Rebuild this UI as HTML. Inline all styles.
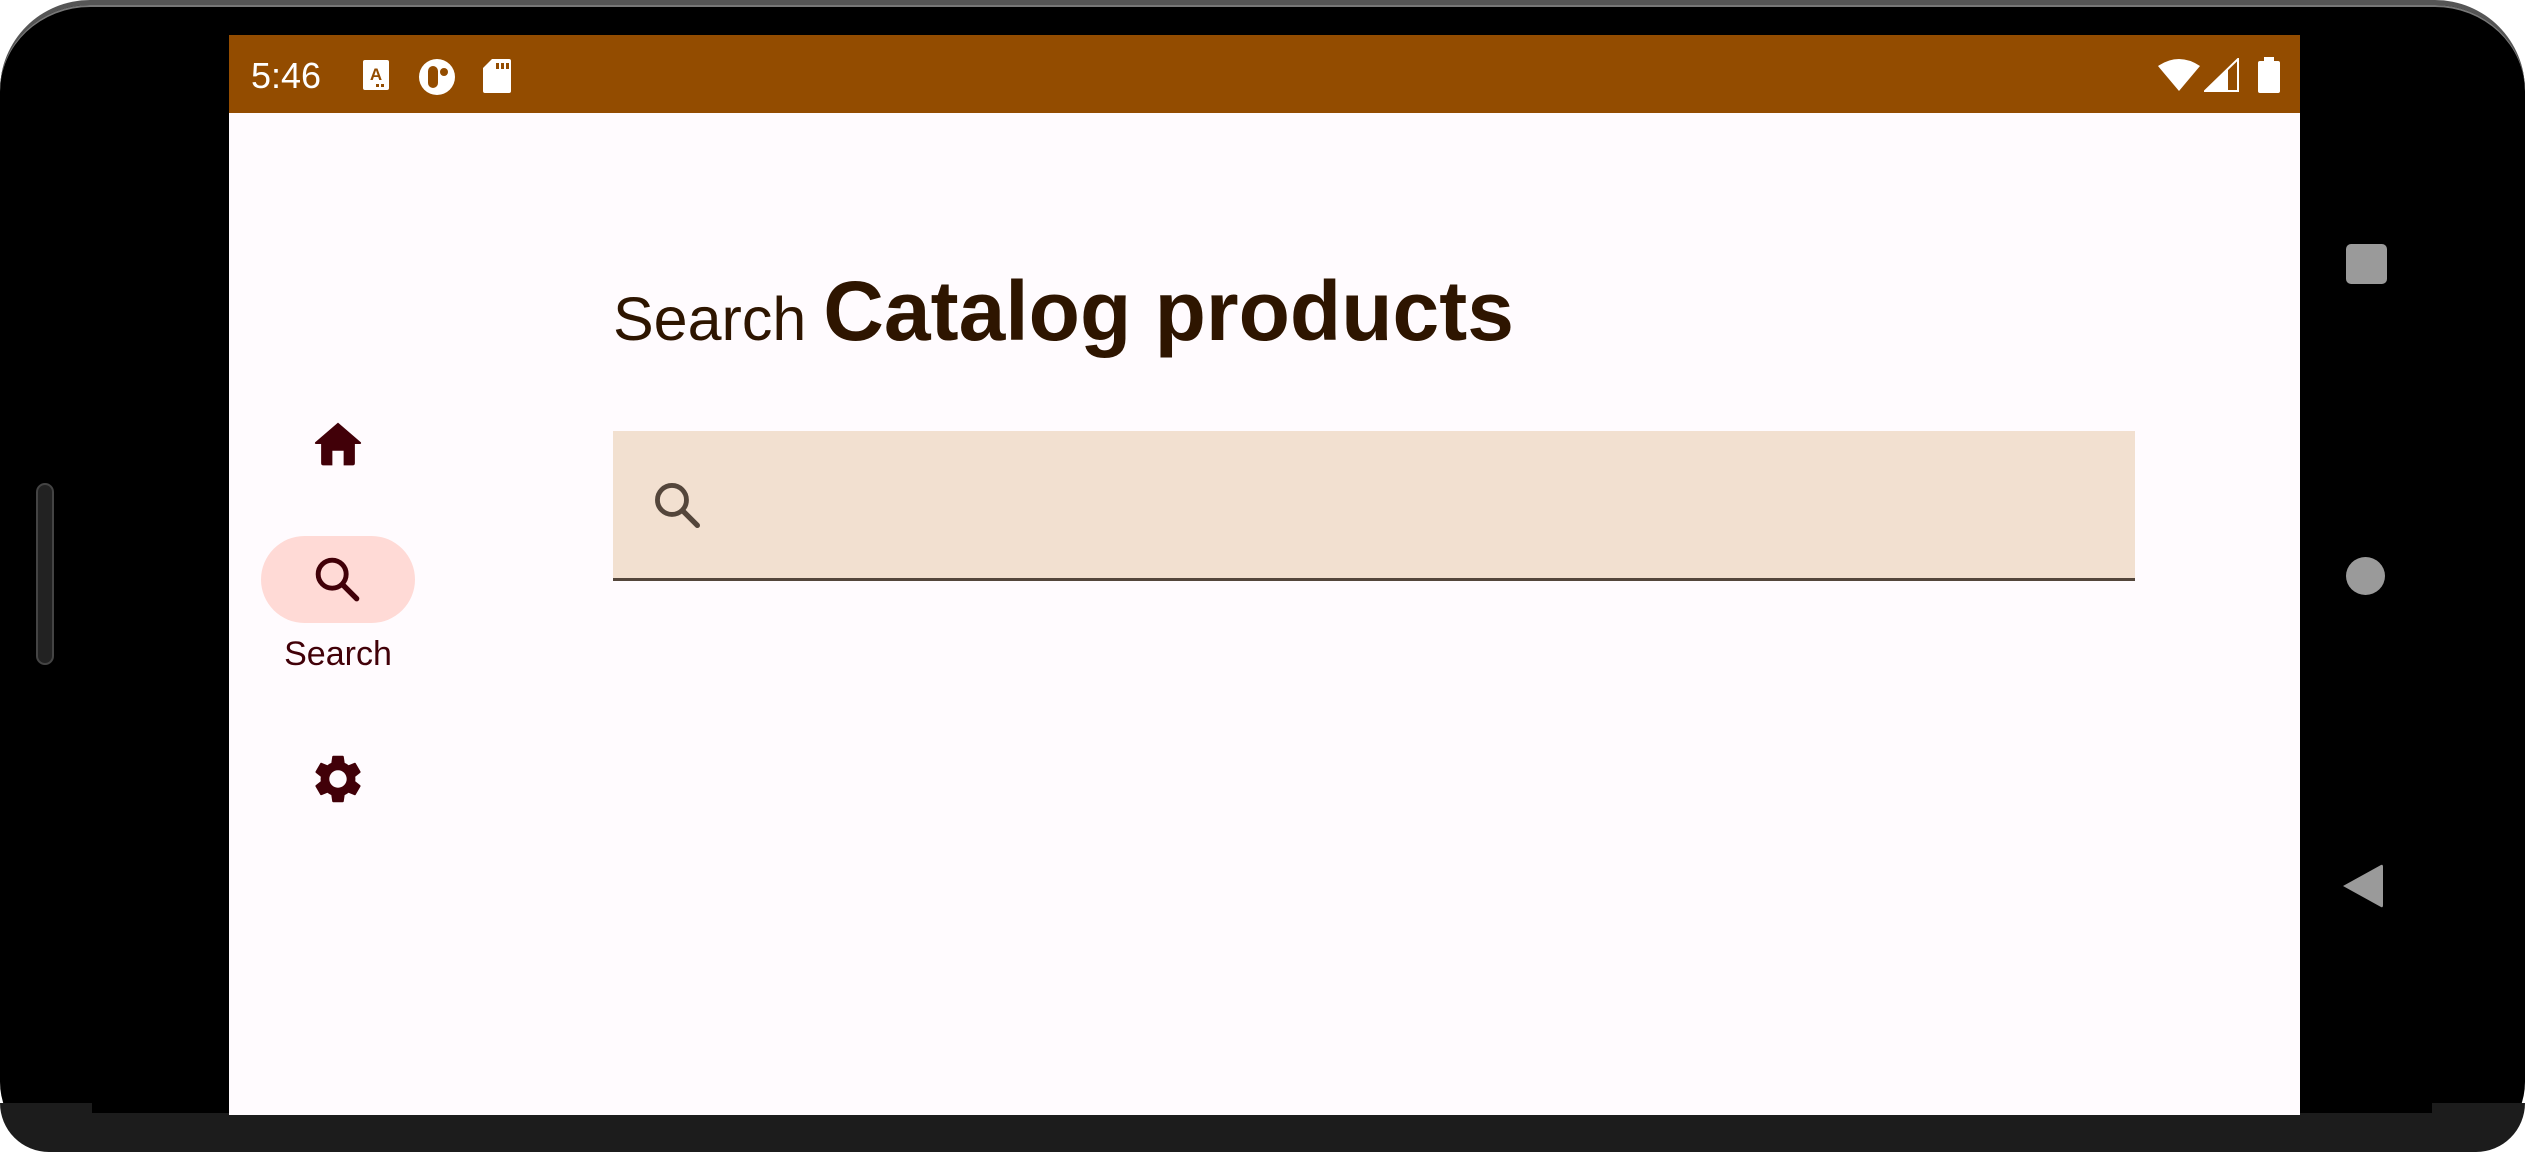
<!DOCTYPE html>
<html><head><meta charset="utf-8"><style>
*{margin:0;padding:0;box-sizing:border-box}
body{width:2525px;height:1152px;background:#fff;position:relative;overflow:hidden;font-family:"Liberation Sans",sans-serif}
.frame{position:absolute;left:0;top:0;width:2525px;height:1152px;background:#000;border-radius:90px 90px 70px 70px;border-top:5px solid #555;box-shadow:inset 0 2px 0 #777}
.bottom{position:absolute;left:0;top:1103px;width:2525px;height:49px;background:#1c1c1c;border-radius:0 0 70px 70px}
.bottom2{position:absolute;left:92px;top:1103px;width:2340px;height:10px;background:#000}
.side{position:absolute;left:36px;top:483px;width:18px;height:182px;background:#222;border:2px solid #444;border-radius:9px}
.screen{position:absolute;left:229px;top:35px;width:2071px;height:1080px;background:#FFFBFE;overflow:hidden}
.status{position:absolute;left:0;top:0;width:2071px;height:78px;background:#934C00}
.time{position:absolute;left:22px;top:20px;color:#fff;font-size:36px;letter-spacing:0px}
.title{position:absolute;left:384px;top:228px;color:#2E1500;white-space:nowrap}
.t1{font-size:61px}
.t2{font-size:84px;font-weight:bold;letter-spacing:0px}
.field{position:absolute;left:384px;top:396px;width:1522px;height:150px;background:#F2E0D0;border-bottom:3px solid #54463B}
.pill{position:absolute;left:32px;top:501px;width:154px;height:87px;border-radius:44px;background:#FFDAD6}
.lbl{position:absolute;left:0;width:218px;text-align:center;top:600px;font-size:34px;color:#410008}
.nb{position:absolute;background:#9a9a9a}
</style></head><body>
<div class="frame"></div>
<div class="bottom"></div><div class="bottom2"></div>
<div class="side"></div>
<div class="nb" style="left:2346px;top:244px;width:41px;height:40px;border-radius:5px"></div>
<div class="nb" style="left:2346px;top:557px;width:39px;height:38px;border-radius:50%"></div>
<svg style="position:absolute;left:2343px;top:864px" width="42" height="44" viewBox="0 0 42 44"><path d="M0 22 L38 1 Q40 0 40 3 L40 41 Q40 44 38 43 Z" fill="#9a9a9a"/></svg>
<div class="screen">
 <div class="status">
  <div class="time">5:46</div>
  <svg style="position:absolute;left:133px;top:24px" width="28" height="32" viewBox="0 0 28 32"><rect x="1" y="1" width="26" height="30" rx="2" fill="#fff"/><text x="14" y="21" font-size="17" font-weight="bold" text-anchor="middle" fill="#934C00" font-family="Liberation Sans">A</text><rect x="14" y="25" width="3" height="3" fill="#934C00"/><rect x="19" y="25" width="3" height="3" fill="#934C00"/></svg>
  <svg style="position:absolute;left:188px;top:22px" width="40" height="40" viewBox="0 0 40 40"><circle cx="20" cy="20" r="18" fill="#fff"/><rect x="11" y="9" width="10" height="22" rx="5" fill="#934C00"/><circle cx="27" cy="15" r="4" fill="#934C00"/></svg>
  <svg style="position:absolute;left:253px;top:23px" width="30" height="36" viewBox="0 0 30 36"><path d="M10 1 H27 Q29 1 29 3 V33 Q29 35 27 35 H3 Q1 35 1 33 V10 Z" fill="#fff"/><rect x="14" y="5" width="3" height="6" fill="#934C00"/><rect x="19" y="5" width="3" height="6" fill="#934C00"/><rect x="24" y="5" width="3" height="6" fill="#934C00"/></svg>
  <svg style="position:absolute;left:1928px;top:23px" width="44" height="34" viewBox="0 0 44 34"><path d="M1 8 Q22 -6 43 8 L22 33 Z" fill="#fff"/></svg>
  <svg style="position:absolute;left:1975px;top:23px" width="35" height="34" viewBox="0 0 35 34"><path d="M1 33 L34 1 V33 Z" fill="none" stroke="#fff" stroke-width="2"/><path d="M1 33 L24 11 V33 Z" fill="#fff"/></svg>
  <svg style="position:absolute;left:2028px;top:21px" width="24" height="38" viewBox="0 0 24 38"><rect x="7" y="1" width="10" height="5" fill="#fff"/><rect x="1" y="5" width="22" height="32" rx="2" fill="#fff"/></svg>
 </div>
 <div class="title"><span class="t1">Search </span><span class="t2">Catalog products</span></div>
 <div class="field">
  <svg style="position:absolute;left:36px;top:46px" width="58" height="58" viewBox="0 0 24 24"><circle cx="9.5" cy="9.5" r="6" fill="none" stroke="#54463B" stroke-width="2"/><path d="M14 14 L20 20" stroke="#54463B" stroke-width="2.2" stroke-linecap="round"/></svg>
 </div>
 <svg style="position:absolute;left:82px;top:382px" width="54" height="54" viewBox="0 0 24 24"><path d="M12 2.5 L1.8 11.3 Q1.5 12 2.3 12 H4.5 V20.5 Q4.5 21.5 5.5 21.5 H9.5 V15 H14.5 V21.5 H18.5 Q19.5 21.5 19.5 20.5 V12 H21.7 Q22.5 12 22.2 11.3 Z" fill="#410008"/></svg>
 <div class="pill"></div>
 <svg style="position:absolute;left:81px;top:517px" width="56" height="56" viewBox="0 0 24 24"><circle cx="9.5" cy="9.5" r="6" fill="none" stroke="#410008" stroke-width="2.1"/><path d="M14 14 L20 20" stroke="#410008" stroke-width="2.3" stroke-linecap="round"/></svg>
 <div class="lbl">Search</div>
 <svg style="position:absolute;left:80px;top:715px" width="58" height="58" viewBox="0 0 24 24"><path fill="#410008" d="M19.14 12.94c.04-.3.06-.61.06-.94 0-.32-.02-.64-.07-.94l2.030-1.58a.49.49 0 0 0 .12-.61l-1.92-3.32a.488.488 0 0 0-.59-.22l-2.39.96c-.5-.38-1.030-.7-1.62-.94l-.36-2.54a.484.484 0 0 0-.48-.41h-3.84c-.24 0-.43.17-.47.41l-.36 2.54c-.59.24-1.13.57-1.62.94l-2.39-.96c-.22-.08-.47 0-.59.22L2.74 8.87c-.12.21-.08.47.12.61l2.030 1.58c-.05.3-.09.63-.09.94s.02.64.07.94l-2.030 1.58a.49.49 0 0 0-.12.61l1.92 3.32c.12.22.37.29.59.22l2.39-.96c.5.38 1.030.7 1.62.94l.36 2.54c.05.24.24.41.48.41h3.84c.24 0 .44-.17.47-.41l.36-2.54c.59-.24 1.13-.56 1.62-.94l2.39.96c.22.08.47 0 .59-.22l1.920-3.32c.12-.22.07-.47-.12-.61l-2.010-1.58zM12 15.6c-1.98 0-3.6-1.62-3.6-3.6s1.62-3.6 3.6-3.6 3.6 1.62 3.6 3.6-1.62 3.6-3.6 3.6z"/></svg>
</div>
</body></html>
